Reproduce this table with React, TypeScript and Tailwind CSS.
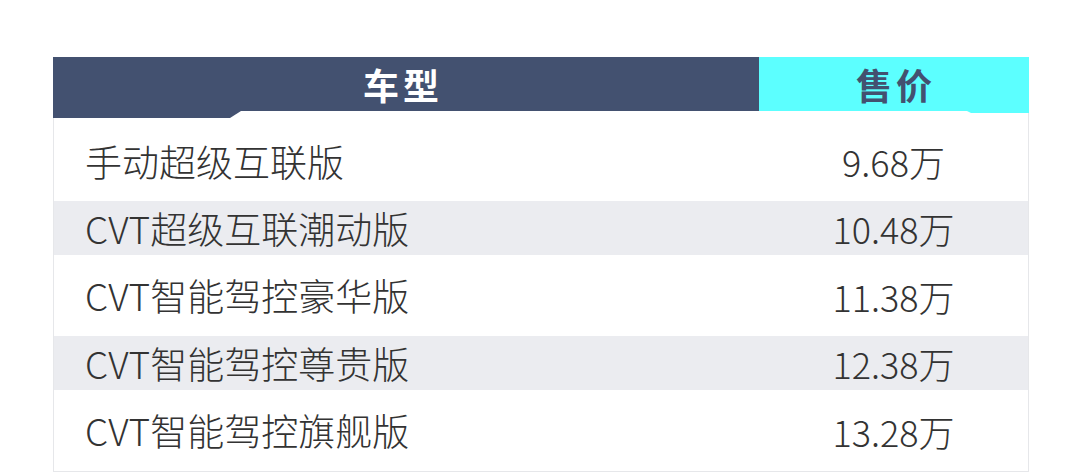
const rows = [
  { name: "手动超级互联版", price: "9.68万", h: "h-[90px] pt-[10px]", gray: false },
  { name: "CVT超级互联潮动版", price: "10.48万", h: "h-[54px]", gray: true },
  { name: "CVT智能驾控豪华版", price: "11.38万", h: "h-[81px]", gray: false },
  { name: "CVT智能驾控尊贵版", price: "12.38万", h: "h-[54px]", gray: true },
  { name: "CVT智能驾控旗舰版", price: "13.28万", h: "h-[81px]", gray: false },
];

export default function App() {
  return (
    <div
      className="w-[1080px] h-[472px] bg-white pt-[57px] pl-[53px] overflow-hidden"
      style={{ fontFamily: '"Noto Sans CJK SC", "Noto Sans", sans-serif' }}
    >
      <div className="w-[976px]">
        {/* Header */}
        <div className="relative flex h-[54px]">
          <div className="relative flex w-[706px] items-center justify-center bg-[#435170]">
            <span className="pr-[6px] text-[36px] font-bold tracking-[4px] text-white leading-none">
              车型
            </span>
            <svg
              className="absolute left-0 top-full"
              width="188"
              height="7"
              viewBox="0 0 188 7"
            >
              <polygon points="0,0 188,0 177,7 0,7" fill="#435170" />
            </svg>
          </div>
          <div className="relative flex w-[270px] items-center justify-center bg-[#5cffff]">
            <span className="pl-[4px] text-[36px] font-bold tracking-[4px] text-[#435170] leading-none">
              售价
            </span>
            <svg
              className="absolute right-0 top-full"
              width="62"
              height="2"
              viewBox="0 0 62 2"
            >
              <polygon points="0,0 62,0 62,2 4,2" fill="#5cffff" />
            </svg>
          </div>
        </div>

        {/* Body */}
        <div className="border-x border-b border-[#e6e7ea]">
          {rows.map((r) => (
            <div
              key={r.name}
              className={`flex items-center ${r.h} ${r.gray ? "bg-[#ebecf0]" : "bg-white"}`}
            >
              <div className="w-[705px] pl-[31px] text-[37px] font-light leading-none text-[#333333]">
                {r.name}
              </div>
              <div className="flex-1 text-center text-[36px] font-light leading-none text-[#333333]">
                {r.price}
              </div>
            </div>
          ))}
        </div>
      </div>
    </div>
  );
}
